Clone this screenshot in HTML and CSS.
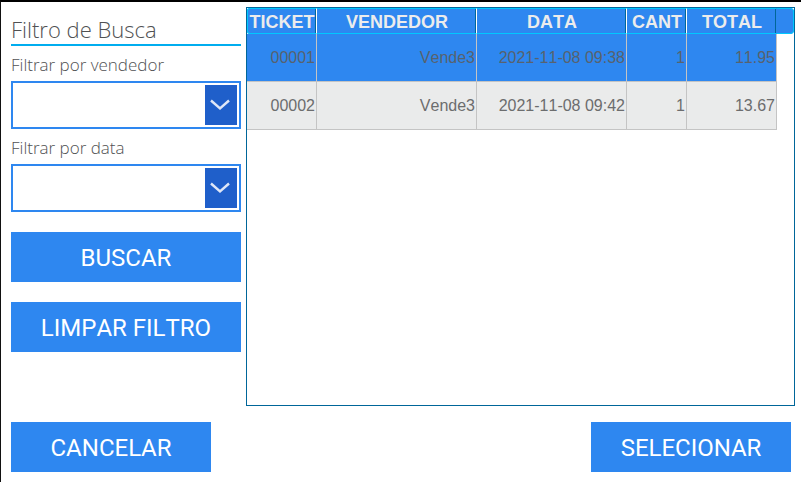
FILE: index.html
```html
<!DOCTYPE html>
<html lang="pt">
<head>
<meta charset="utf-8">
<title>Filtro de Busca</title>
<link rel="stylesheet" href="styles.css">
</head>
<body>
<main class="dialog">
  <div class="content">
    <form class="filters">
      <h1 class="title">Filtro de Busca</h1>
      <label class="label" for="vendedor">Filtrar por vendedor</label>
      <div class="combo">
        <select id="vendedor"><option></option></select>
        <svg class="arrow" viewBox="0 0 32 40" aria-hidden="true"><path d="M6 15.5 15 23.5 24 15.5"/></svg>
      </div>
      <label class="label" for="data">Filtrar por data</label>
      <div class="combo">
        <select id="data"><option></option></select>
        <svg class="arrow" viewBox="0 0 32 40" aria-hidden="true"><path d="M6 15.5 15 23.5 24 15.5"/></svg>
      </div>
      <button class="button" type="button">BUSCAR</button>
      <button class="button" type="reset">LIMPAR FILTRO</button>
    </form>
    <section class="results">
      <table>
        <colgroup><col class="ticket"><col class="seller"><col class="date"><col class="count"><col class="total"><col></colgroup>
        <thead>
          <tr><th>TICKET</th><th>VENDEDOR</th><th>DATA</th><th>CANT</th><th>TOTAL</th><td></td></tr>
        </thead>
        <tbody>
          <tr class="selected"><td>00001</td><td>Vende3</td><td>2021-11-08 09:38</td><td>1</td><td>11.95</td></tr>
          <tr><td>00002</td><td>Vende3</td><td>2021-11-08 09:42</td><td>1</td><td>13.67</td></tr>
        </tbody>
      </table>
    </section>
  </div>
  <footer class="actions">
    <button class="button" type="button">CANCELAR</button>
    <button class="button" type="button">SELECIONAR</button>
  </footer>
</main>
</body>
</html>
```
FILE: styles.css
```css
* { box-sizing: border-box; }

body {
  margin: 0;
  background: #fff;
  color: #505153;
  font-family: "Open Sans", "Noto Sans", sans-serif;
}

.dialog {
  display: flex;
  flex-direction: column;
  gap: 16px;
  min-height: 100vh;
  padding: 5px 6px 10px 10px;
  border-top: 2px solid #000;
  border-left: 1px solid #111;
}

.content {
  display: flex;
  flex: 1;
  gap: 5px;
}

.filters {
  display: flex;
  flex-direction: column;
  flex: 0 0 230px;
  padding-top: 8px;
}

.title {
  margin: 0 0 6px;
  border-bottom: 2px solid #00adef;
  font-size: 22px;
  font-weight: 300;
  line-height: 29px;
}

.label {
  margin-bottom: 3px;
  font-size: 17px;
  font-weight: 300;
  line-height: 26px;
}

.combo {
  position: relative;
  margin-bottom: 6px;
}

.combo select {
  display: block;
  width: 100%;
  height: 48px;
  padding: 0 40px 0 8px;
  border: 2px solid #2e87f0;
  border-radius: 0;
  background: #fff;
  color: inherit;
  font: inherit;
  appearance: none;
}

.arrow {
  position: absolute;
  top: 4px;
  right: 4px;
  width: 32px;
  height: 40px;
  background: #1f5fca;
  fill: none;
  stroke: #dfe7f7;
  stroke-width: 2.4;
  pointer-events: none;
}

.button {
  height: 50px;
  padding: 2px 0 0;
  border: 0;
  background: #2e87f0;
  color: #fff;
  font: 400 24px "Roboto", sans-serif;
  font-kerning: none;
}

.filters .button { margin-top: 14px; }
.filters .button + .button { margin-top: 20px; }

.results {
  flex: 1;
  border: 1px solid #006699;
  font-family: "Liberation Sans", Arial, sans-serif;
}

table {
  width: 100%;
  table-layout: fixed;
  border-collapse: separate;
  border-spacing: 0;
  font-kerning: none;
}

.ticket { width: 70px; }
.seller { width: 160px; }
.date { width: 150px; }
.count { width: 60px; }
.total { width: 90px; }

thead tr { background: #2e87f0; }

thead th,
thead td {
  height: 26px;
  padding: 1px 0 0 1px;
  border-top: 1px solid #00c8ff;
  border-bottom: 1px solid #00c8ff;
  color: #ececec;
  font-size: 18px;
  line-height: 22px;
}

thead th {
  border-right: 1px solid #fff;
  box-shadow: inset -1px 0 #006699;
}

thead th:first-child {
  padding-left: 0;
  border-left: 1px solid #00c8ff;
  border-top-left-radius: 3px;
  border-bottom-left-radius: 3px;
}

thead th:nth-child(5) { border-right-color: #2e87f0; }

thead td {
  border-right: 1px solid #00c8ff;
  border-top-right-radius: 4px;
  border-bottom-right-radius: 4px;
}

tbody td {
  height: 48px;
  padding: 0 1px 0 0;
  border-right: 1px solid #c4c4c4;
  border-bottom: 1px solid #c4c4c4;
  background: #eaebeb;
  color: #6c6d6e;
  font-size: 16px;
  text-align: right;
}

.selected td {
  background: #2e87f0;
  color: #58626e;
}

.actions {
  display: flex;
  justify-content: space-between;
  padding-right: 4px;
}

.actions .button { width: 200px; }
```
